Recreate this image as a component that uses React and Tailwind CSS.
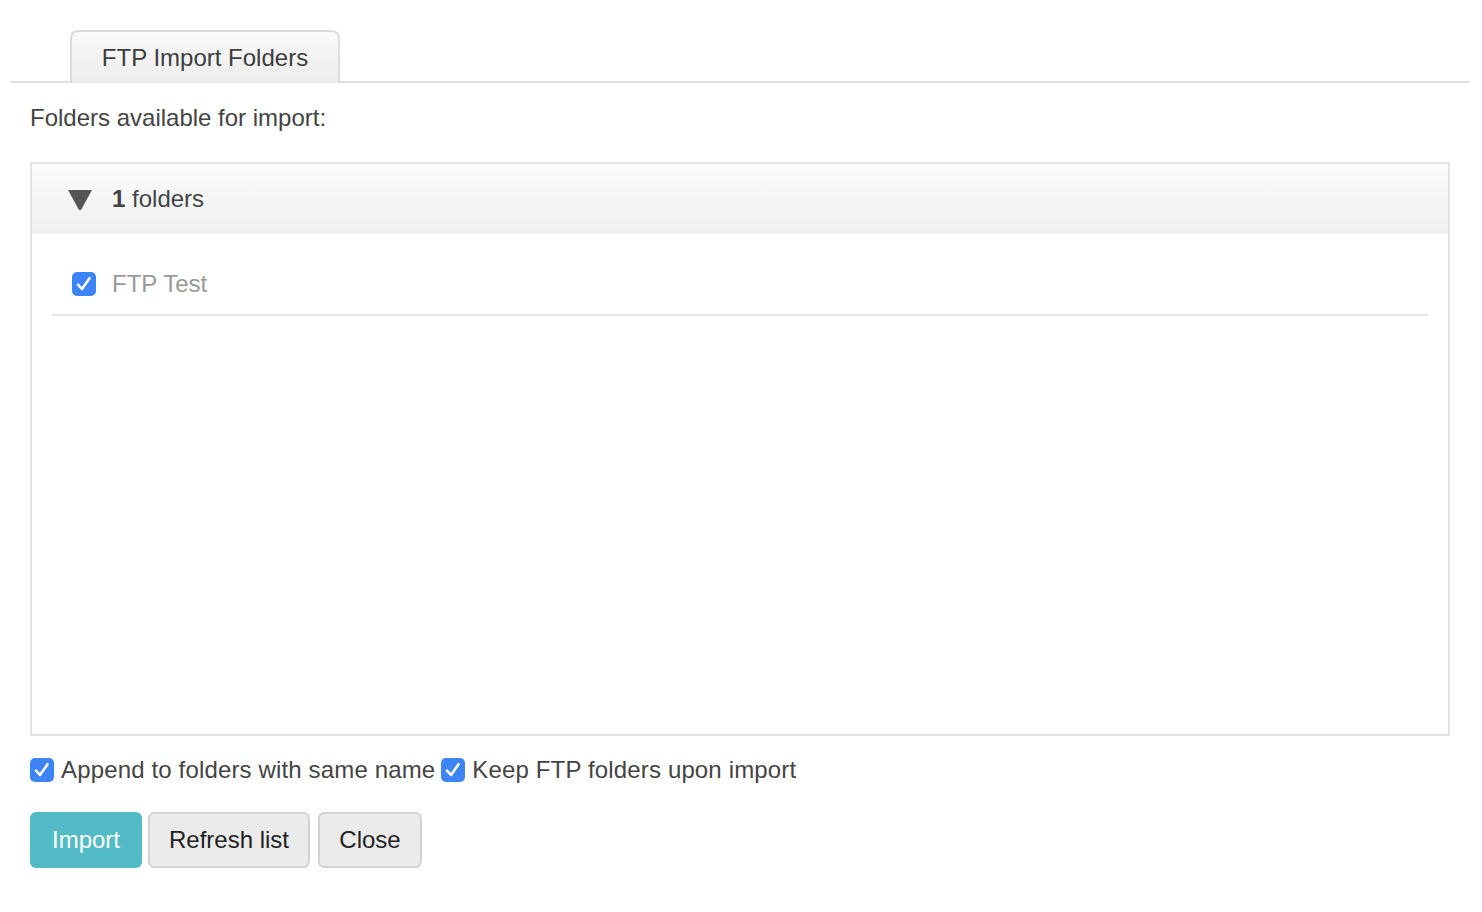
import React, { useState } from "react";

const Check = ({ checked, onChange }) => (
  <button
    type="button"
    onClick={onChange}
    className={`w-6 h-6 rounded-[5px] flex items-center justify-center shrink-0 ${
      checked ? "bg-[#3d84f7]" : "bg-white border-2 border-[#bbb]"
    }`}
  >
    {checked && (
      <svg width="24" height="24" viewBox="0 0 24 24" fill="none">
        <path d="M6 12.6 L10 17 L17.6 6.2" stroke="white" strokeWidth="2.6" strokeLinecap="round" strokeLinejoin="round" />
      </svg>
    )}
  </button>
);

export default function App() {
  const [items, setItems] = useState([{ id: 1, name: "FTP Test", checked: true }]);
  const [append, setAppend] = useState(true);
  const [keep, setKeep] = useState(true);
  const [open, setOpen] = useState(true);

  const toggleItem = (id) =>
    setItems((prev) => prev.map((it) => (it.id === id ? { ...it, checked: !it.checked } : it)));

  return (
    <div className="min-h-screen bg-white text-[#444] text-[24px] font-['Liberation_Sans',Arial,sans-serif]">
      <div className="pl-[10px] pr-[12px] pt-[30px]">
        <div className="flex border-b-2 border-[#e0e0e0] pl-[60px]">
          <div className="-mb-[2px] h-[53px] w-[270px] flex items-center justify-center rounded-t-[8px] border-2 border-b-0 border-[#dcdcdc] bg-gradient-to-b from-[#fafafa] to-[#ececec] text-[#3d3d3d]">
            FTP Import Folders
          </div>
        </div>

        <div className="px-[20px]">
          <p className="mt-[21px] leading-[28px]">Folders available for import:</p>

          <div className="mt-[30px] h-[574px] border-2 border-[#e3e3e3] flex flex-col">
            <div
              className="h-[70px] flex items-center pl-[35px] bg-gradient-to-b from-[#fbfbfb] to-[#f0f0f0] cursor-pointer"
              onClick={() => setOpen(!open)}
            >
              <svg width="26" height="22" viewBox="0 0 26 22" className="mt-[2px]">
                <path d="M1 1 H25 L14.5 20 Q13 22.5 11.5 20 Z" fill="#555" />
              </svg>
              <span className="ml-[19px]">
                <b>1</b> folders
              </span>
            </div>

            {open && (
              <div className="px-[20px] pt-[36px]">
                {items.map((it) => (
                  <div key={it.id} className="flex items-center pl-[20px] pb-[16px] border-b-2 border-[#e5e5e5]">
                    <Check checked={it.checked} onChange={() => toggleItem(it.id)} />
                    <span className="ml-[16px] text-[#999] leading-[28px]">{it.name}</span>
                  </div>
                ))}
              </div>
            )}
          </div>

          <div className="mt-[22px] flex items-center h-[24px] tracking-[0.15px]">
            <Check checked={append} onChange={() => setAppend(!append)} />
            <span className="ml-[7px]">Append to folders with same name</span>
            <span className="ml-[6px]">
              <Check checked={keep} onChange={() => setKeep(!keep)} />
            </span>
            <span className="ml-[7px]">Keep FTP folders upon import</span>
          </div>

          <div className="mt-[30px] flex gap-[6px]">
            <button className="h-[56px] w-[112px] rounded-[6px] bg-[#53bbc5] text-white">Import</button>
            <button className="h-[56px] w-[162px] rounded-[6px] bg-[#ebebeb] border-2 border-[#d2d2d2] text-[#222]">
              Refresh list
            </button>
            <button className="ml-[2px] h-[56px] w-[104px] rounded-[6px] bg-[#ebebeb] border-2 border-[#d2d2d2] text-[#222]">
              Close
            </button>
          </div>
        </div>
      </div>
    </div>
  );
}
